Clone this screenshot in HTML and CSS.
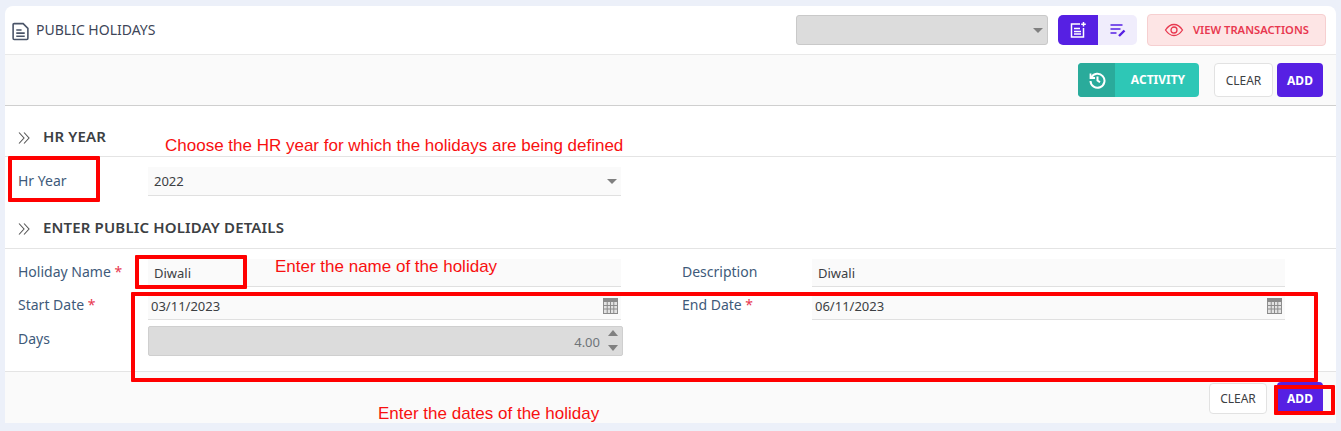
FILE: index.html
```html
<!DOCTYPE html>
<html lang="en">
<head>
  <meta charset="UTF-8" />
  <title>Public Holidays</title>
  <link rel="stylesheet" href="styles.css">
</head>
<body>
  <div class="card">
    <div class="header">
      <svg class="title-icon" width="19" height="19" viewBox="0 0 18 18" fill="none" stroke="#4a5468" stroke-width="1.5">
        <path d="M2 2.500a1 1 0 0 1 1-1h8.500L16 6v9.500a1 1 0 0 1-1 1H3a1 1 0 0 1-1-1z"/>
        <path d="M5 7.500h5M5 10.500h8M5 13.500h8"/>
      </svg>
      <div class="page-title">PUBLIC HOLIDAYS</div>
      <div class="fake-select top-select"><span class="caret"></span></div>
      <div class="toggle">
        <div class="toggle-btn on">
          <svg width="18" height="18" viewBox="0 0 18 18" fill="none" stroke="#fff" stroke-width="1.5">
            <path d="M11 3H2.500v13h12V7"/>
            <path d="M5 7.500h6M5 10.500h7M5 13h7"/>
            <path d="M14.500 1v4.500M12.200 3.200h4.600"/>
          </svg>
        </div>
        <div class="toggle-btn">
          <svg width="18" height="18" viewBox="0 0 18 18" fill="none" stroke="#5620e3" stroke-width="1.5">
            <path d="M1.500 4h12M1.500 8h10M1.500 12h6"/>
            <path d="M10 15l5.500-5.500" stroke-width="2.400"/>
          </svg>
        </div>
      </div>
      <button class="btn-view">
        <svg width="20" height="14" viewBox="0 0 20 14" fill="none" stroke="#e8384f" stroke-width="1.300">
          <path d="M1.500 7C4 3.200 6.800 1.500 10 1.500S16 3.200 18.500 7C16 10.800 13.200 12.500 10 12.500S4 10.800 1.500 7z"/>
          <circle cx="10" cy="7" r="3"/>
        </svg>
        VIEW TRANSACTIONS
      </button>
    </div>

    <div class="toolbar">
      <div class="btn-activity">
        <span class="activity-icon">
          <svg width="18" height="18" viewBox="0 0 18 18" fill="none" stroke="#fff" stroke-width="2">
            <path d="M3.300 6.500A7 7 0 1 1 2.500 10"/>
            <path d="M2.500 2.500v4.500H7" stroke-width="1.800"/>
            <path d="M9.500 5.500v4l2.500 1.800"/>
          </svg>
        </span>
        <span class="activity-text">ACTIVITY</span>
      </div>
      <button class="btn-clear">CLEAR</button>
      <button class="btn-add">ADD</button>
    </div>

    <div class="content">
      <div class="section-title first">
        <svg class="chevrons" width="12" height="12" viewBox="0 0 12 12" fill="none" stroke="#555" stroke-width="1.100">
          <path d="M1 .5L6 6 1 11.500M6 .5L11 6 6 11.500"/>
        </svg>
        HR YEAR
      </div>
      <div class="form-row">
        <div class="field year-field">
          <label>Hr Year</label>
          <div class="fake-select year-select">2022<span class="caret"></span></div>
        </div>
      </div>

      <div class="section-title">
        <svg class="chevrons" width="12" height="12" viewBox="0 0 12 12" fill="none" stroke="#555" stroke-width="1.100">
          <path d="M1 .5L6 6 1 11.500M6 .5L11 6 6 11.500"/>
        </svg>
        ENTER PUBLIC HOLIDAY DETAILS
      </div>
      <div class="details">
        <div class="field name-field">
          <label>Holiday Name <em>*</em></label>
          <div class="input name-input">Diwali</div>
        </div>
        <div class="field name-field">
          <label>Description</label>
          <div class="input name-input">Diwali</div>
        </div>
        <div class="field date-field">
          <label>Start Date <em>*</em></label>
          <div class="input date-input">03/11/2023
            <svg class="cal" width="15" height="16" viewBox="0 0 16 16" preserveAspectRatio="none">
              <rect width="16" height="16" fill="#8a8a8a"/>
              <path d="M1 4h14v11H1z" fill="#e2e2e2"/>
              <path d="M4.500 4v11M8 4v11M11.500 4v11M1 7.500h14M1 11h14" stroke="#8a8a8a" stroke-width="1"/>
            </svg>
          </div>
        </div>
        <div class="field date-field">
          <label>End Date <em>*</em></label>
          <div class="input date-input">06/11/2023
            <svg class="cal" width="15" height="16" viewBox="0 0 16 16" preserveAspectRatio="none">
              <rect width="16" height="16" fill="#8a8a8a"/>
              <path d="M1 4h14v11H1z" fill="#e2e2e2"/>
              <path d="M4.500 4v11M8 4v11M11.500 4v11M1 7.500h14M1 11h14" stroke="#8a8a8a" stroke-width="1"/>
            </svg>
          </div>
        </div>
        <div class="field">
          <label>Days</label>
          <div class="days-input">4.00
            <span class="spin"><i class="up"></i><i class="down"></i></span>
          </div>
        </div>
      </div>
    </div>

    <div class="footer">
      <button class="btn-clear">CLEAR</button>
      <button class="btn-add">ADD</button>
    </div>
  </div>

  <!-- annotations drawn over the screenshot -->
  <div class="mark mark-year"></div>
  <div class="mark mark-name"></div>
  <div class="mark mark-dates"></div>
  <div class="mark mark-add"></div>
  <div class="note note-year">Choose the HR year for which the holidays are being defined</div>
  <div class="note note-name">Enter the name of the holiday</div>
  <div class="note note-dates">Enter the dates of the holiday</div>
</body>
</html>
```

FILE: styles.css
```css
html, body {
  height: 431px;
  overflow: hidden;
}

body {
  font-family: "Noto Sans", Arial, sans-serif;
  background: #ecf0f9;
  margin: 0;
  padding: 6px 5px 8px 5px;
  box-sizing: border-box;
  position: relative;
  color: #3c4043;
}

.card {
  background: #fff;
  border-radius: 8px 8px 0 0;
  height: 417px;
  display: flex;
  flex-direction: column;
}

.header {
  height: 48px;
  display: flex;
  align-items: center;
  padding: 0 10px 0 7px;
  border-bottom: 1px solid #e9e9e9;
}

.title-icon {
  margin: 2px 6px 0 -1px;
}

.page-title {
  font-size: 14px;
  color: #3d4558;
  flex: 1;
  padding-bottom: 2px;
}

.fake-select {
  position: relative;
  box-sizing: border-box;
  font-size: 13px;
}

.top-select {
  width: 252px;
  height: 30px;
  background: #dcdcdc;
  border: 1px solid #c9c9c9;
  border-radius: 3px;
  margin-right: 10px;
}

.caret {
  position: absolute;
  right: 4px;
  top: 50%;
  margin-top: -2px;
  border-left: 5px solid transparent;
  border-right: 5px solid transparent;
  border-top: 5px solid #808080;
}

.toggle {
  display: flex;
  height: 30px;
  border-radius: 5px;
  overflow: hidden;
  margin-right: 10px;
}

.toggle-btn {
  width: 39px;
  background: #f0edfc;
  display: flex;
  align-items: center;
  justify-content: center;
}

.toggle-btn.on {
  width: 40px;
  background: #5620e3;
}

button {
  font-family: inherit;
  cursor: pointer;
}

.btn-view {
  width: 179px;
  height: 32px;
  background: #fde5e5;
  border: 1px solid #f6cfd0;
  border-radius: 4px;
  color: #e8384f;
  font-size: 11.2px;
  font-weight: 600;
  display: flex;
  align-items: center;
  justify-content: center;
  gap: 9px;
  padding: 0;
  margin-top: -1px;
}

.toolbar {
  height: 50px;
  background: #fafafa;
  border-bottom: 1px solid #cfcfcf;
  display: flex;
  align-items: center;
  justify-content: flex-end;
  padding: 0 13px;
  flex: none;
}

.btn-activity {
  width: 121px;
  height: 34px;
  background: #2ec7b6;
  border-radius: 4px;
  overflow: hidden;
  display: flex;
  margin-right: 15px;
  color: #fff;
  font-size: 12px;
  font-weight: 700;
}

.activity-icon {
  width: 37px;
  background: #2aab9b;
  display: flex;
  align-items: center;
  justify-content: center;
}

.activity-text {
  flex: 1;
  text-align: center;
  line-height: 34px;
  padding-left: 2px;
}

.btn-clear {
  width: 59px;
  height: 34px;
  background: #fff;
  border: 1px solid #e2e2e2;
  border-radius: 4px;
  color: #3c4043;
  font-size: 12px;
  padding: 0;
  margin-right: 4px;
}

.btn-add {
  width: 46px;
  height: 34px;
  background: #5620e3;
  border: none;
  border-radius: 4px;
  color: #fff;
  font-size: 12px;
  font-weight: 700;
  padding: 0;
}

.content {
  flex: 1;
}

.section-title {
  height: 30px;
  border-bottom: 1px solid #e4e4e4;
  display: flex;
  align-items: flex-start;
  padding-left: 13px;
  margin-top: 22px;
  font-size: 15px;
  font-weight: 600;
  line-height: 19px;
  color: #3c4043;
  letter-spacing: 0.15px;
}

.section-title.first {
  height: 51px;
  box-sizing: border-box;
  margin-top: 0;
  padding-top: 21px;
}

.chevrons {
  flex: none;
  margin: 5px 13px 0 0;
}

.form-row {
  padding: 10px 0 0 13px;
}

.details {
  display: grid;
  grid-template-columns: 603px 603px;
  column-gap: 61px;
  row-gap: 8px;
  padding: 10px 0 0 13px;
}

.field {
  display: flex;
  align-items: flex-start;
}

label {
  width: 130px;
  flex: none;
  font-size: 14px;
  line-height: 19px;
  color: #3e5a7a;
  padding-top: 1px;
}

.year-field label {
  padding-top: 4px;
}

.name-field label {
  padding-top: 3px;
}

.date-field label {
  padding-top: 0;
}

label em {
  font-style: normal;
  color: #e8384f;
}

.year-select {
  width: 473px;
  height: 29px;
  background: #fafafa;
  border-bottom: 1px solid #e0e0e0;
  line-height: 29px;
  padding-left: 6px;
  color: #3c4043;
}

.input {
  width: 473px;
  flex: none;
  background: #fafafa;
  border-bottom: 1px solid #e0e0e0;
  box-sizing: border-box;
  font-size: 13px;
  color: #3c4043;
  position: relative;
}

.name-input {
  height: 28px;
  line-height: 28px;
  padding-left: 6px;
}

.date-input {
  height: 25px;
  line-height: 22px;
  padding-left: 3px;
}

.cal {
  position: absolute;
  right: 3px;
  top: 3px;
}

.days-input {
  width: 475px;
  flex: none;
  height: 30px;
  box-sizing: border-box;
  background: #dcdcdc;
  border: 1px solid #cfcfcf;
  border-radius: 2px;
  font-size: 13px;
  color: #6f7479;
  text-align: right;
  line-height: 30px;
  padding-right: 22px;
  position: relative;
  margin-top: -2px;
}

.spin {
  position: absolute;
  right: 4px;
  top: 3px;
  display: flex;
  flex-direction: column;
  gap: 9px;
}

.spin i {
  display: block;
  border-left: 5px solid transparent;
  border-right: 5px solid transparent;
}

.spin .up {
  border-bottom: 6px solid #808080;
}

.spin .down {
  border-top: 6px solid #808080;
}

.footer {
  height: 52px;
  background: #fafafa;
  border-top: 1px solid #e4e4e4;
  display: flex;
  justify-content: flex-end;
  align-items: flex-start;
  padding: 11px 13px 0 0;
  box-sizing: border-box;
  flex: none;
}

.footer .btn-clear {
  width: 58px;
  height: 31px;
  margin-right: 10px;
}

.footer .btn-add {
  height: 32px;
  margin-top: -1px;
}

/* annotations */
.mark {
  position: absolute;
  border: 4px solid #ff0000;
  box-sizing: border-box;
  border-radius: 1px;
}

.mark-year {
  left: 8px;
  top: 156px;
  width: 92px;
  height: 46px;
}

.mark-name {
  left: 135px;
  top: 255px;
  width: 112px;
  height: 34px;
}

.mark-dates {
  left: 131px;
  top: 292px;
  width: 1187px;
  height: 90px;
}

.mark-add {
  left: 1274px;
  top: 385px;
  width: 61px;
  height: 30px;
}

.note {
  position: absolute;
  font-family: "Liberation Sans", Arial, sans-serif;
  font-size: 17px;
  line-height: 18px;
  color: #f81010;
  white-space: nowrap;
}

.note-year {
  left: 165px;
  top: 137px;
}

.note-name {
  left: 275px;
  top: 258px;
}

.note-dates {
  left: 378px;
  top: 405px;
}
```
